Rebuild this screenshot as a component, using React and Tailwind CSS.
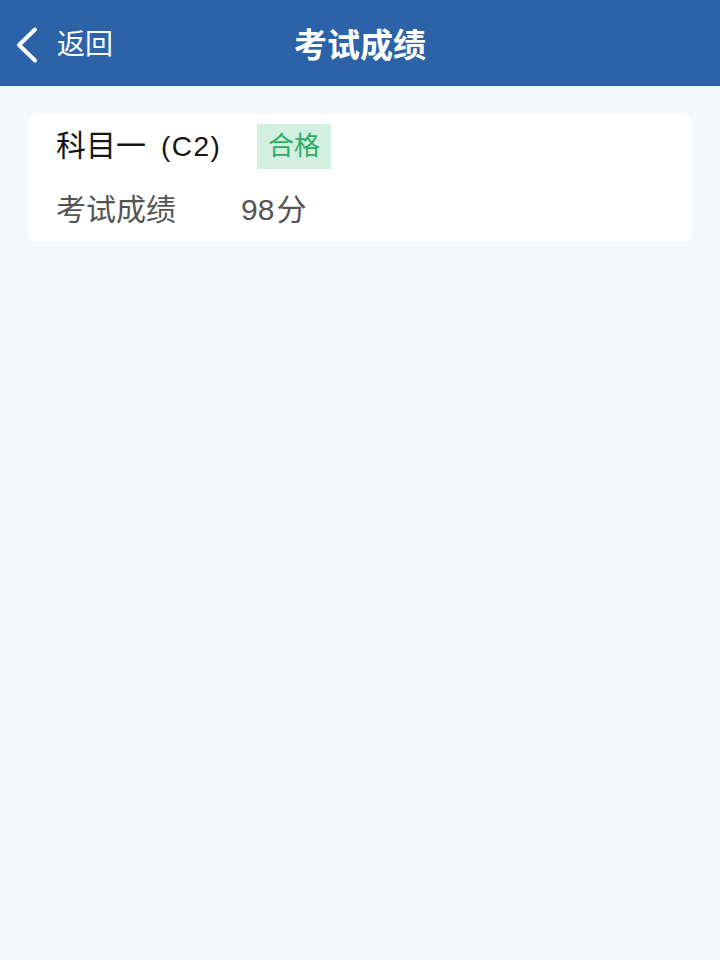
import React from "react";

export default function App() {
  return (
    <div
      className="min-h-[960px] w-full bg-[#f4f8fa]"
      style={{ fontFamily: '"Liberation Sans", "Noto Sans CJK SC", sans-serif' }}
    >
      <header className="relative flex h-[86px] items-center bg-[#2c63a8] pt-[4px] text-white">
        <div className="flex items-center pl-[15px]">
          <svg width="24" height="38" viewBox="0 0 24 38" fill="none">
            <polyline
              points="20,3.5 4,19 20,34.5"
              stroke="#ffffff"
              strokeWidth="4"
              strokeLinecap="round"
              strokeLinejoin="round"
            />
          </svg>
          <span className="ml-[18px] text-[28px] leading-none">返回</span>
        </div>
        <div className="pointer-events-none absolute inset-0 flex items-center justify-center pt-[4px]">
          <span className="text-[33px] font-bold leading-none">考试成绩</span>
        </div>
      </header>
      <main className="px-[28px] pt-[28px]">
        <div className="rounded-[8px] bg-white px-[28px] py-[8px]">
          <div className="flex h-[48px] items-center">
            <span className="flex w-[201px] items-baseline leading-none text-[#151515]">
              <span className="text-[30px]">科目一</span>
              <span className="ml-[15px] text-[28px] tracking-[1.5px]">(C2)</span>
            </span>
            <span className="flex h-[45px] items-center bg-[#d3efdf] px-[11px] text-[26px] leading-none text-[#2aad63]">
              合格
            </span>
          </div>
          <div className="mt-[16px] flex h-[48px] items-center text-[30px] leading-none text-[#555555]">
            <span className="w-[185px]">考试成绩</span>
            <span>
              98<span className="ml-[2px]">分</span>
            </span>
          </div>
        </div>
      </main>
    </div>
  );
}
